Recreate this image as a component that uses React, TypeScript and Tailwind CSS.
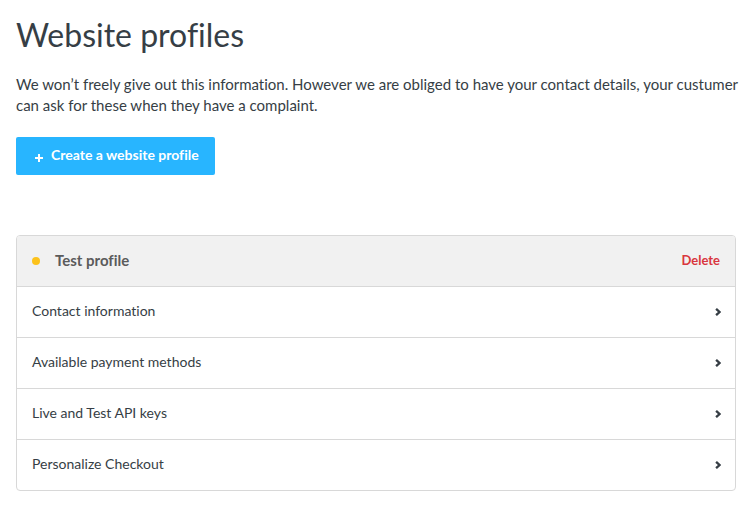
const sections = [
  "Contact information",
  "Available payment methods",
  "Live and Test API keys",
  "Personalize Checkout",
];

function PlusIcon() {
  return (
    <svg aria-hidden="true" className="mt-1 size-2" viewBox="0 0 8 8" fill="none" stroke="currentColor" strokeWidth="2">
      <path d="M4 0v8M0 4h8" />
    </svg>
  );
}

function ChevronIcon() {
  return (
    <svg aria-hidden="true" className="h-2 w-1.5" viewBox="0 0 6 8" fill="none" stroke="currentColor" strokeWidth="2.3">
      <path d="M1.1 0.8L4.5 4L1.1 7.2" />
    </svg>
  );
}

export default function App() {
  return (
    <main className="bg-white px-4 pt-4 pb-8 font-['Lato','Liberation_Sans',sans-serif] text-[14px] text-[#363e45] [font-variant-ligatures:none]">
      <h1 className="text-[32px] leading-[38px]">Website profiles</h1>
      <p className="mt-5 text-[15px] leading-[21px]">
        We won’t freely give out this information. However we are obliged to have your contact details, your custumer
        can ask for these when they have a complaint.
      </p>
      <button
        type="button"
        className="mt-[21px] flex h-[38px] items-center gap-2 rounded-xs bg-[#28b5ff] pr-4 pl-[19px] font-bold text-white"
      >
        <PlusIcon />
        <span className="pb-1">Create a website profile</span>
      </button>

      <section className="mt-[60px] mr-1 overflow-hidden rounded border border-[#d8d8d8]">
        <header className="flex h-[50px] items-center bg-[#f1f1f1] px-[15px]">
          <span className="size-2 rounded-full bg-[#fcc21b]" />
          <h2 className="ml-[15px] pb-0.5 text-[15px] font-bold text-[#5b5b5b]">Test profile</h2>
          <button type="button" className="ml-auto text-[13px] font-bold text-[#d9363e]">
            Delete
          </button>
        </header>
        <ul>
          {sections.map((title) => (
            <li key={title} className="border-t border-[#d8d8d8]">
              <a href="#" className="flex h-[50px] items-center justify-between pr-3.5 pl-[15px]">
                <span className="pb-1">{title}</span>
                <ChevronIcon />
              </a>
            </li>
          ))}
        </ul>
      </section>
    </main>
  );
}
